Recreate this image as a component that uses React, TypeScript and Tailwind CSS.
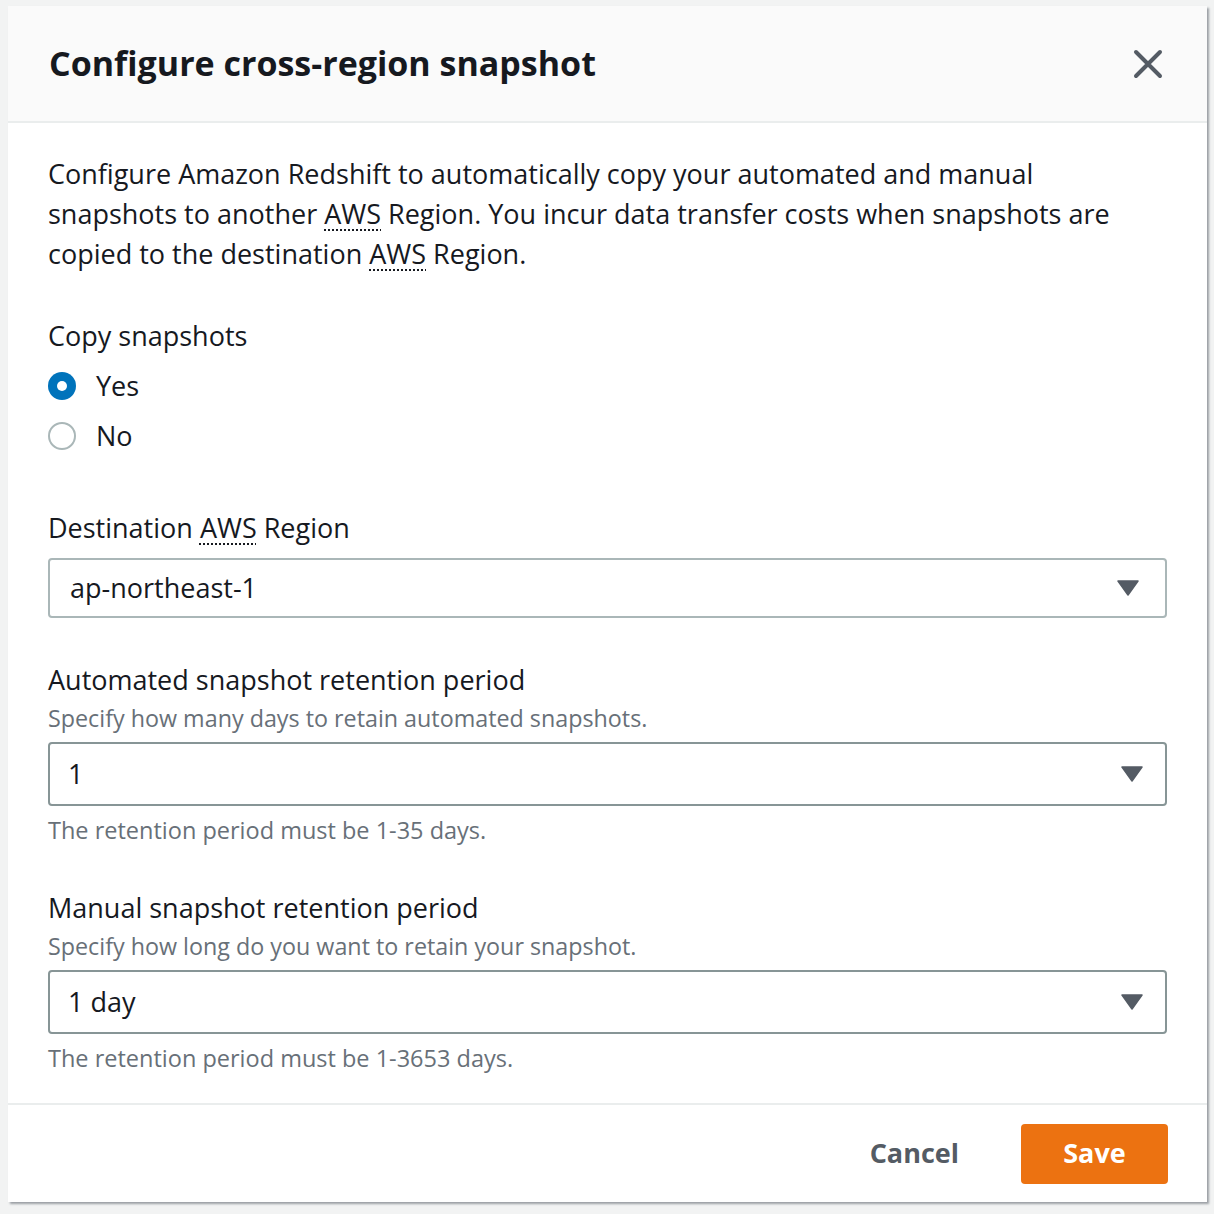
import React from "react";

const font = { fontFamily: '"Open Sans", "Noto Sans", sans-serif' };

function Abbr({ children }: { children: React.ReactNode }) {
  return (
    <span className="underline decoration-dotted decoration-[2px] underline-offset-[5px] decoration-[#16191f]">{children}</span>
  );
}

function Caret() {
  return (
    <svg width="22" height="16" viewBox="0 0 22 16" className="shrink-0">
      <path d="M1 1 H21 L11 15 Z" fill="#545b64" stroke="#545b64" strokeWidth="1.5" strokeLinejoin="round" />
    </svg>
  );
}

function Select({ value, light }: { value: string; light?: boolean }) {
  return (
    <div
      className={
        light
          ? "flex h-[60px] items-center justify-between rounded-[4px] border-2 border-[#aab7b8] pl-[20px] pr-[26px]"
          : "flex h-[64px] items-center justify-between rounded-[4px] border-2 border-[#879596] pl-[18px] pr-[22px]"
      }
    >
      <span className="text-[27px] text-[#16191f]">{value}</span>
      <Caret />
    </div>
  );
}

export default function App() {
  return (
    <div className="min-h-[1214px] w-[1214px] bg-[#f2f3f3] pt-[6px] pl-[8px]" style={font}>
      <div className="w-[1199px] bg-white shadow-[2px_2px_2px_rgba(84,91,100,0.55)]">
        <div className="flex h-[117px] items-center justify-between border-b-2 border-[#eaeded] bg-[#fafafa] pl-[41px] pr-[44px]">
          <h1 className="text-[34px] font-bold text-[#16191f]">Configure cross-region snapshot</h1>
          <svg width="30" height="30" viewBox="0 0 30 30">
            <path d="M3 3 L27 27 M27 3 L3 27" stroke="#545b64" strokeWidth="4" strokeLinecap="round" />
          </svg>
        </div>
        <div className="px-[40px] pt-[31px] pb-[25px] text-[#16191f]">
          <p className="text-[27px] leading-[40px]">
            Configure Amazon Redshift to automatically copy your automated and manual
            <br />
            snapshots to another <Abbr>AWS</Abbr> Region. You incur data transfer costs when snapshots are
            <br />
            copied to the destination <Abbr>AWS</Abbr> Region.
          </p>
          <div className="mt-[42px] text-[27px] leading-[40px]">Copy snapshots</div>
          <div className="mt-[10px] flex flex-col gap-[10px]">
            <div className="flex h-[40px] items-center gap-[20px]">
              <span className="flex h-[28px] w-[28px] items-center justify-center rounded-full bg-[#0073bb]">
                <span className="h-[10px] w-[10px] rounded-full bg-white" />
              </span>
              <span className="text-[27px]">Yes</span>
            </div>
            <div className="flex h-[40px] items-center gap-[20px]">
              <span className="h-[28px] w-[28px] rounded-full border-2 border-[#aab7b8]" />
              <span className="text-[27px]">No</span>
            </div>
          </div>
          <div className="mt-[52px] text-[27px] leading-[40px]">
            Destination <Abbr>AWS</Abbr> Region
          </div>
          <div className="mt-[10px]">
            <Select value="ap-northeast-1" light />
          </div>
          <div className="mt-[42px] text-[27px] leading-[40px]">Automated snapshot retention period</div>
          <div className="text-[23.3px] leading-[36px] text-[#687078]">Specify how many days to retain automated snapshots.</div>
          <div className="mt-[6px]">
            <Select value="1" />
          </div>
          <div className="mt-[4px] text-[23.5px] leading-[40px] text-[#687078]">The retention period must be 1-35 days.</div>
          <div className="mt-[38px] text-[27px] leading-[40px]">Manual snapshot retention period</div>
          <div className="text-[23.3px] leading-[36px] text-[#687078]">Specify how long do you want to retain your snapshot.</div>
          <div className="mt-[6px]">
            <Select value="1 day" />
          </div>
          <div className="mt-[4px] text-[23.5px] leading-[40px] text-[#687078]">The retention period must be 1-3653 days.</div>
        </div>
        <div className="flex h-[99px] items-center justify-end gap-[62px] border-t-2 border-[#eaeded] pr-[39px]">
          <span className="text-[27px] font-bold text-[#545b64]">Cancel</span>
          <button className="flex h-[60px] w-[147px] items-center justify-center rounded-[4px] bg-[#ec7211] text-[27px] font-bold text-white">
            Save
          </button>
        </div>
      </div>
    </div>
  );
}
